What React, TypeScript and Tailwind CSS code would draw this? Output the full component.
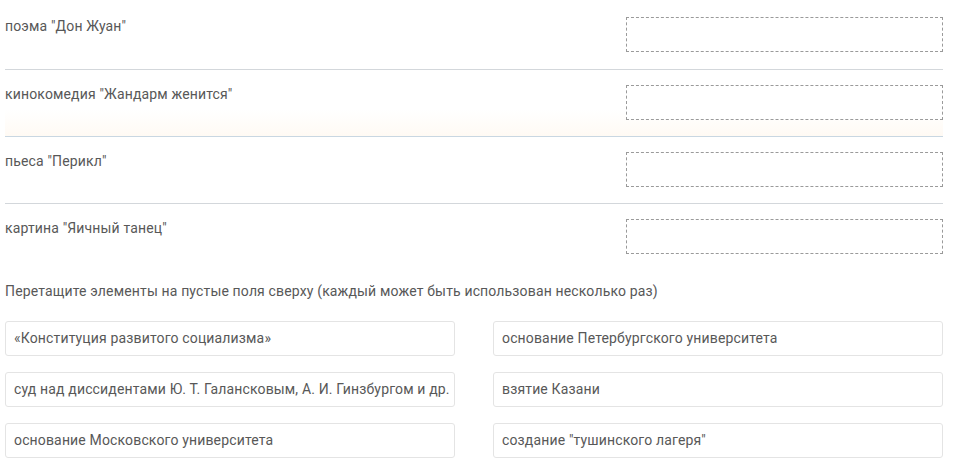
const rows = [
  'поэма "Дон Жуан"',
  'кинокомедия "Жандарм женится"',
  'пьеса "Перикл"',
  'картина "Яичный танец"',
];

const items = [
  "«Конституция развитого социализма»",
  "основание Петербургского университета",
  "суд над диссидентами Ю. Т. Галансковым, А. И. Гинзбургом и др.",
  "взятие Казани",
  "основание Московского университета",
  'создание "тушинского лагеря"',
];

export default function App() {
  return (
    <div className="w-[954px] h-[469px] bg-white overflow-hidden font-['Roboto','Liberation_Sans',sans-serif] text-[14px] tracking-[0.15px] text-[#585858]">
      <div className="ml-[5px] w-[938px]">
        {rows.map((label, i) => (
          <div
            key={label}
            className={`flex justify-between items-start ${i === 0 ? "pt-[17px] pb-[17px]" : "pt-[15px] pb-[16px]"} ${
              i === 1 ? "border-b border-[#c9d7e2] bg-gradient-to-b from-white from-60% to-[#fffaf4]" : i < rows.length - 1 ? "border-b border-[#d3d7db]" : ""
            }`}
          >
            <span className="leading-[17px] pt-px">{label}</span>
            <div className="w-[317px] h-[35px] border border-dashed border-[#9a9a9a] bg-white" />
          </div>
        ))}

        <p className="mt-[13px] leading-[17px]">
          Перетащите элементы на пустые поля сверху (каждый может быть использован несколько раз)
        </p>

        <div className="grid grid-cols-2 gap-x-[38px] gap-y-[16px] mt-[21px]">
          {items.map((t) => (
            <div
              key={t}
              className="h-[35px] flex items-center px-[8px] border border-[#e4e4e4] rounded-[3px] whitespace-nowrap"
            >
              {t}
            </div>
          ))}
        </div>
      </div>
    </div>
  );
}
